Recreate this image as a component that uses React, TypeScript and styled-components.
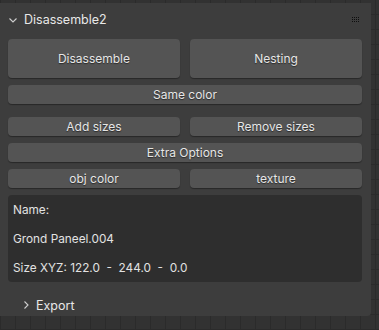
import styled, { createGlobalStyle } from 'styled-components';

const GlobalStyle = createGlobalStyle`
  html, body {
    margin: 0;
    padding: 0;
    width: 379px;
    height: 330px;
    overflow: hidden;
    background-color: #323232;
    background-image:
      repeating-linear-gradient(90deg, #2b2b2b 0 1px, transparent 1px 15px),
      repeating-linear-gradient(0deg, #2b2b2b 0 1px, transparent 1px 15px);
    font-family: Inter, "DejaVu Sans", sans-serif;
  }
`;

const App = () => {
  return (
    <>
      <GlobalStyle />
      <Panel>
        <Header>
          <Chevron viewBox="0 0 10 10">
            <path d="M1.5 3.5 L5 7 L8.5 3.5" />
          </Chevron>
          <HeaderTitle>Disassemble2</HeaderTitle>
          <Grip viewBox="0 0 8 5">
            {[0, 2, 4, 6].map(x =>
              [0, 2, 4].map(y => <rect key={`${x}-${y}`} x={x} y={y} width="1" height="1" />)
            )}
          </Grip>
        </Header>
        <Body>
          <Row>
            <Button $big>Disassemble</Button>
            <Button $big>Nesting</Button>
          </Row>
          <Button>Same color</Button>
          <Spacer />
          <Row>
            <Button>Add sizes</Button>
            <Button>Remove sizes</Button>
          </Row>
          <Button>Extra Options</Button>
          <Row>
            <Button>obj color</Button>
            <Button>texture</Button>
          </Row>
          <InfoBox>
            <InfoLine>Name:</InfoLine>
            <InfoLine>Grond Paneel.004</InfoLine>
            <InfoLine>Size XYZ: 122.0&nbsp; -&nbsp; 244.0&nbsp; -&nbsp; 0.0</InfoLine>
          </InfoBox>
        </Body>
        <SubHeader>
          <Chevron viewBox="0 0 10 10">
            <path d="M3.5 1.5 L7 5 L3.5 8.5" />
          </Chevron>
          <span>Export</span>
        </SubHeader>
      </Panel>
    </>
  );
};

export default App;

const Panel = styled.div`
  width: 371px;
  height: 313px;
  margin-top: 3px;
  background: #3d3d3d;
  color: #e6e6e6;
  font-size: 12px;
  display: flex;
  flex-direction: column;
  border-bottom-right-radius: 4px;
`;

const Header = styled.div`
  height: 33px;
  display: flex;
  align-items: center;
  padding: 0 11px 0 8px;
  gap: 6px;
`;

const Chevron = styled.svg`
  width: 10px;
  height: 10px;
  fill: none;
  stroke: #cfcfcf;
  stroke-width: 1.1;
`;

const HeaderTitle = styled.span`
  flex: 1;
  font-size: 12.5px;
  color: #e8e8e8;
`;

const Grip = styled.svg`
  width: 8px;
  height: 5px;
  fill: #0e0e0e;
`;

const Body = styled.div`
  display: flex;
  flex-direction: column;
  gap: 7px;
  padding: 3px 9px 0 8px;
`;

const Row = styled.div`
  display: grid;
  grid-template-columns: 1fr 1fr;
  gap: 10px;
`;

const Spacer = styled.div`
  height: 5px;
  margin-top: -6px;
`;

const Button = styled.div<{ $big?: boolean }>`
  height: ${p => (p.$big ? 39 : 19)}px;
  display: flex;
  align-items: center;
  justify-content: center;
  background: #545454;
  border-radius: 4px;
  box-shadow: 0 1px 1px rgba(0, 0, 0, 0.35);
  color: #e6e6e6;
  font-size: 12px;
  text-shadow: 0 1px 1px rgba(0, 0, 0, 0.5);
`;

const InfoBox = styled.div`
  height: 87px;
  background: #2e2e2e;
  border-radius: 4px;
  padding: 6px 5px;
  box-sizing: border-box;
  display: flex;
  flex-direction: column;
  justify-content: space-between;
`;

const InfoLine = styled.div`
  height: 17px;
  display: flex;
  align-items: center;
  font-size: 11.8px;
  color: #e2e2e2;
  white-space: pre;
`;

const SubHeader = styled.div`
  margin-top: auto;
  height: 22px;
  display: flex;
  align-items: center;
  gap: 5px;
  padding-left: 21px;
  font-size: 12.5px;
  color: #e8e8e8;
`;
